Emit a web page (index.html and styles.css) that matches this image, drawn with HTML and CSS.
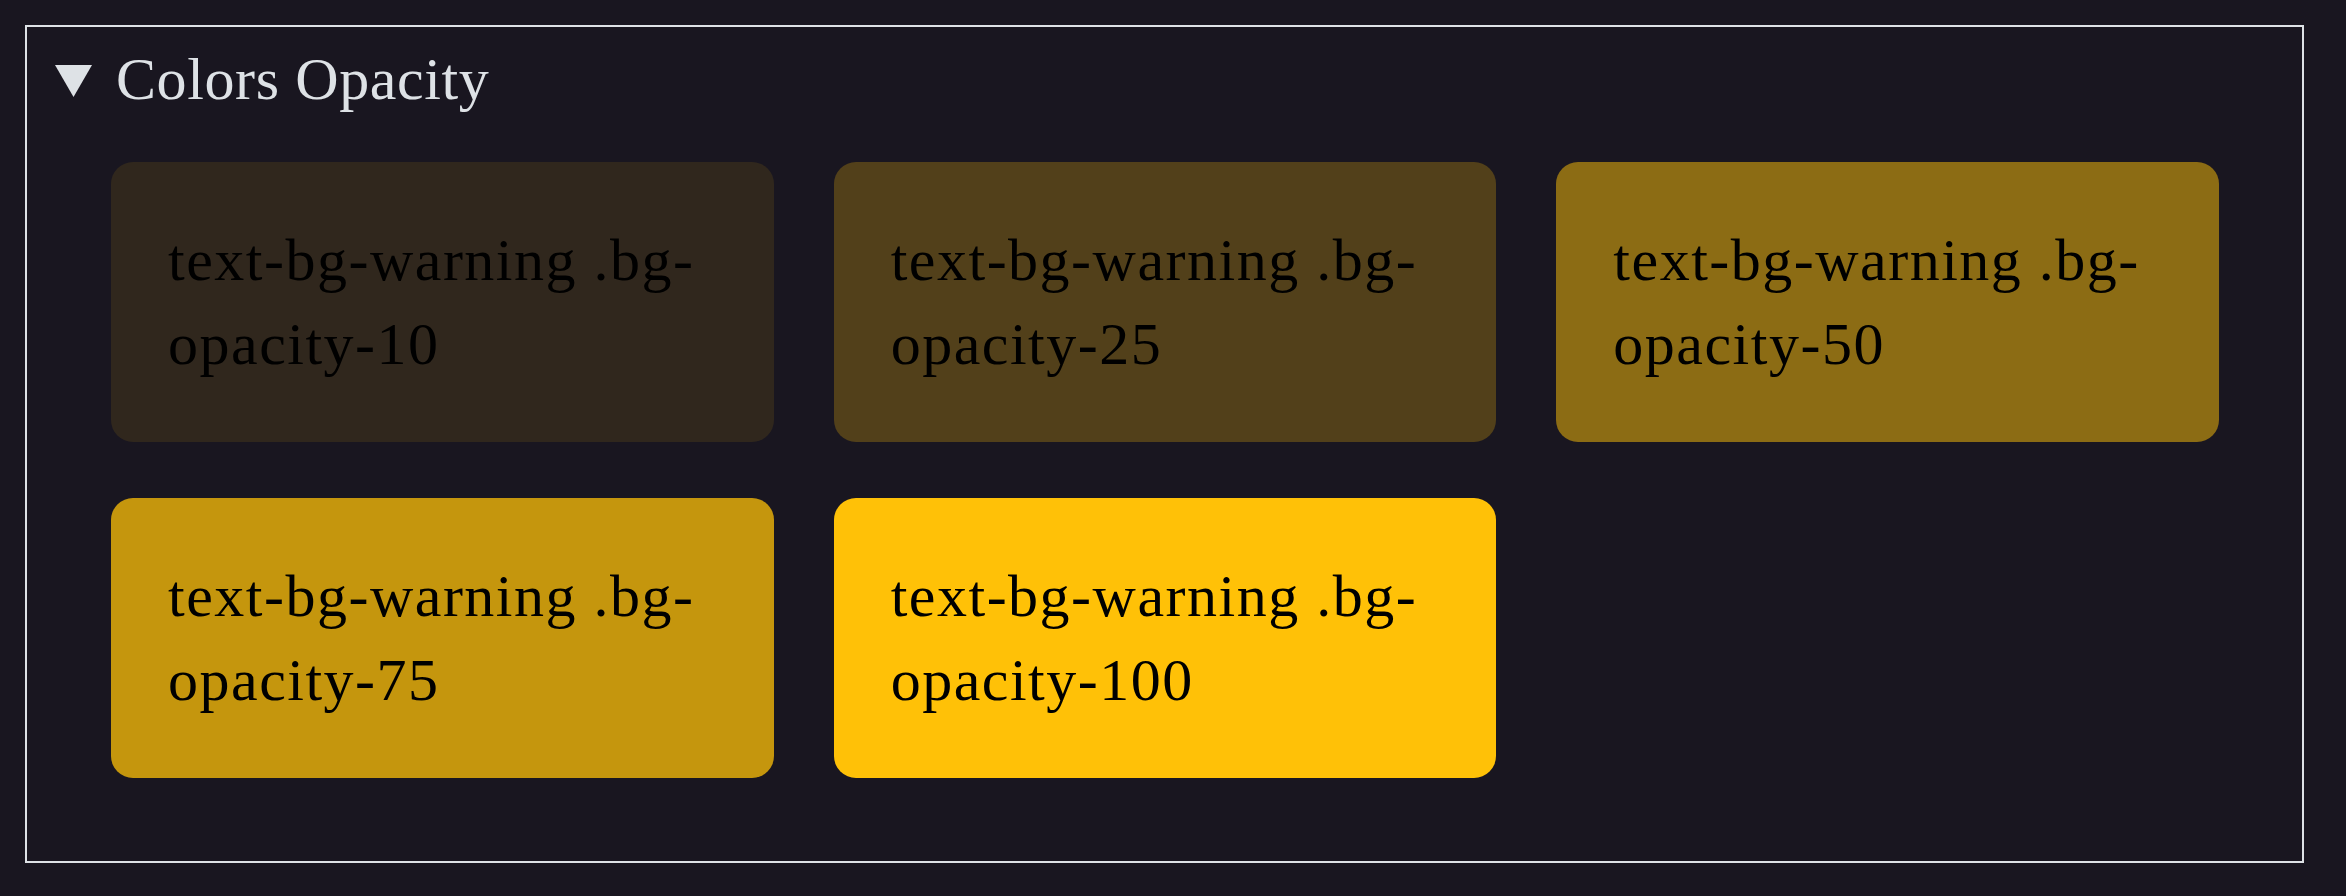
FILE: index.html
```html
<!DOCTYPE html>
<html lang="en">
<head>
    <meta charset="UTF-8">
    <meta name="viewport" content="width=device-width, initial-scale=1.0">
    <title>Colors Opacity</title>
    <link rel="stylesheet" href="styles.css">
</head>
<body>

    <!-- Opacity swatches for the warning background -->
    <details class="demo" open>
        <summary class="demo-title">
            <svg class="caret" viewBox="0 0 37 32" width="37" height="32"><polygon points="0,0 37,0 18.5,32" fill="#dee2e6"/></svg>
            <span>Colors Opacity</span>
        </summary>
        <div class="swatches">
            <div class="swatch" style="background-color: rgba(255, 193, 7, 0.1);">text-bg-warning .bg-opacity-10</div>
            <div class="swatch" style="background-color: rgba(255, 193, 7, 0.25);">text-bg-warning .bg-opacity-25</div>
            <div class="swatch" style="background-color: rgba(255, 193, 7, 0.5);">text-bg-warning .bg-opacity-50</div>
            <div class="swatch" style="background-color: rgba(255, 193, 7, 0.75);">text-bg-warning .bg-opacity-75</div>
            <div class="swatch" style="background-color: rgba(255, 193, 7, 1);">text-bg-warning .bg-opacity-100</div>
        </div>
    </details>

</body>
</html>
```

FILE: styles.css
```css
body {
    font-family: "Liberation Serif", serif;
    background-color: #191620;
    color: #dee2e6;
    margin: 0;
    padding: 25px 42px 0 25px;
}
.demo {
    border: 2px solid #dee2e6;
    padding: 10px 83px 83px 84px;
}
.demo-title {
    list-style: none;
    display: flex;
    align-items: center;
    gap: 24px;
    margin-left: -56px;
    margin-bottom: 41px;
    font-size: 60px;
    line-height: 84px;
    letter-spacing: 0.6px;
    cursor: pointer;
}
.demo-title::-webkit-details-marker {
    display: none;
}
.caret {
    margin-top: 4px;
    flex-shrink: 0;
}
.swatches {
    display: grid;
    grid-template-columns: repeat(3, 1fr);
    column-gap: 60px;
    row-gap: 56px;
}
.swatch {
    color: #000;
    font-size: 60px;
    line-height: 84px;
    letter-spacing: 1.5px;
    padding: 56px 57px;
    border-radius: 22px;
}
```
